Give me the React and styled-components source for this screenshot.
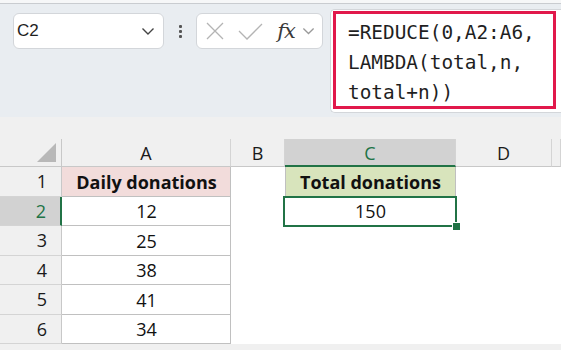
import React from "react";
import styled, { createGlobalStyle } from "styled-components";

const GlobalStyle = createGlobalStyle`
  html, body {
    margin: 0;
    padding: 0;
    background: #f0f0f0;
    width: 561px;
    height: 350px;
    overflow: hidden;
  }
`;

const Page = styled.div`
  width: 561px;
  height: 350px;
  display: flex;
  flex-direction: column;
  font-family: "Open Sans", "Liberation Sans", sans-serif;
  overflow: hidden;
`;

const FormulaBar = styled.div`
  height: 117px;
  background: #e9edf1;
  border-top: 3px solid #f6f7f8;
  box-shadow: inset 0 1px 0 #c9ccd0;
  display: flex;
  align-items: flex-start;
  padding: 6px 0 0 13px;
  box-sizing: border-box;
`;

const Box = styled.div`
  height: 36px;
  width: ${(p) => p.$width}px;
  margin-top: 4px;
  box-sizing: border-box;
  background: #fff;
  border: 1px solid #d3d6da;
  border-radius: 6px;
  display: flex;
  align-items: center;
`;

const NameText = styled.span`
  flex: 1;
  padding-left: 3px;
  font-family: "Liberation Sans", Arial, sans-serif;
  font-size: 17px;
  color: #1e1e1e;
`;

const Dots = styled.div`
  width: 32px;
  height: 44px;
  display: flex;
  flex-direction: column;
  align-items: center;
  justify-content: center;
  gap: 2px;
  span {
    width: 3px;
    height: 3px;
    background: #555;
    border-radius: 1px;
  }
`;

const IconSlot = styled.div`
  display: flex;
  align-items: center;
  justify-content: center;
  width: ${(p) => p.$w}px;
  margin-left: ${(p) => p.$ml || 0}px;
  margin-right: ${(p) => p.$mr || 0}px;
`;

const Fx = styled.span`
  font-family: "DejaVu Serif", "Liberation Serif", serif;
  font-style: italic;
  font-size: 21px;
  color: #3a3a3a;
  letter-spacing: -1px;
`;

const FormulaInput = styled.div`
  flex: 1;
  height: 104px;
  margin-left: 7px;
  background: #fff;
  border: 1px solid #d3d6da;
  border-right: none;
  border-radius: 5px 0 0 5px;
  padding: 1px 4px 0 2px;
  box-sizing: border-box;
`;

const Highlight = styled.div`
  width: 223px;
  height: 98px;
  box-sizing: border-box;
  border: 3px solid #e1184b;
  padding: 4px 0 0 12px;
  font-family: "DejaVu Sans Mono", "Liberation Mono", monospace;
  font-size: 19.4px;
  line-height: 30px;
  color: #1f1f1f;
  white-space: pre;
`;

const Gap = styled.div`
  height: 22px;
  background: #f0f0f0;
`;

const Grid = styled.div`
  display: grid;
  grid-template-columns: 62px 169px 54px 171px 96px 1fr;
  grid-template-rows: 28px repeat(6, 29.5px);
  background: #fff;
`;

const Corner = styled.div`
  background: #f0f0f0;
  border-right: 1px solid #c8c8c8;
  border-bottom: 1px solid #c8c8c8;
  position: relative;
  &::after {
    content: "";
    position: absolute;
    right: 5px;
    bottom: 4px;
    width: 0;
    height: 0;
    border-left: 19px solid transparent;
    border-bottom: 19px solid #b8b8b8;
  }
`;

const ColHead = styled.div`
  background: ${(p) => (p.$active ? "#d2d2d2" : "#f0f0f0")};
  color: ${(p) => (p.$active ? "#217346" : "#1a1a1a")};
  border-right: 1px solid #d4d4d4;
  border-bottom: ${(p) => (p.$active ? "2px solid #217346" : "1px solid #c8c8c8")};
  display: flex;
  align-items: center;
  justify-content: center;
  font-size: 18px;
  box-sizing: border-box;
  padding-top: ${(p) => (p.$active ? "1px" : "0")};
`;

const RowHead = styled.div`
  background: ${(p) => (p.$active ? "#d2d2d2" : "#f0f0f0")};
  color: ${(p) => (p.$active ? "#217346" : "#1a1a1a")};
  border-right: ${(p) => (p.$active ? "2px solid #217346" : "1px solid #c8c8c8")};
  border-bottom: 1px solid #d4d4d4;
  display: flex;
  align-items: center;
  justify-content: flex-end;
  padding-right: 14px;
  font-size: 18px;
  box-sizing: border-box;
`;

const Cell = styled.div`
  background: ${(p) => p.$fill || "#fff"};
  box-shadow: ${(p) =>
    p.$bordered
      ? `inset -1px -1px 0 #c0c0c0${p.$left ? ", inset 1px 0 0 #c0c0c0" : ""}`
      : "none"};
  display: flex;
  align-items: center;
  justify-content: center;
  font-size: 18px;
  font-weight: ${(p) => (p.$bold ? 700 : 400)};
  color: #111;
  position: relative;
`;

const Selection = styled.div`
  position: absolute;
  z-index: 2;
  left: -2px;
  top: -1px;
  right: -1px;
  bottom: -1px;
  border: 2px solid #217346;
  pointer-events: none;
`;

const Handle = styled.span`
  position: absolute;
  right: -6px;
  bottom: -6px;
  width: 7px;
  height: 7px;
  background: #217346;
  border: 1px solid #fff;
`;

const Chevron = ({ color = "#444", size = 14 }) => (
  <svg width={size} height={size / 2 + 2} viewBox="0 0 14 9">
    <path d="M1.5 1.5 L7 7 L12.5 1.5" fill="none" stroke={color} strokeWidth="1.4" />
  </svg>
);

const columns = ["A", "B", "C", "D", ""];
const values = [12, 25, 38, 41, 34];

export default function App() {
  return (
    <Page>
      <GlobalStyle />
      <FormulaBar>
        <Box $width={151}>
          <NameText>C2</NameText>
          <IconSlot $w={22} $mr={4}>
            <Chevron />
          </IconSlot>
        </Box>
        <Dots>
          <span />
          <span />
          <span />
        </Dots>
        <Box $width={127}>
          <IconSlot $w={19} $ml={8}>
            <svg width="18" height="18" viewBox="0 0 18 18">
              <path d="M1 1 L17 17 M17 1 L1 17" stroke="#b4b4b4" strokeWidth="1.3" />
            </svg>
          </IconSlot>
          <IconSlot $w={26} $ml={13}>
            <svg width="25" height="17" viewBox="0 0 25 17">
              <path d="M1 8 L9 16 L24 1" fill="none" stroke="#b4b4b4" strokeWidth="1.3" />
            </svg>
          </IconSlot>
          <IconSlot $w={24} $ml={11}>
            <Fx>fx</Fx>
          </IconSlot>
          <IconSlot $w={16} $ml={2}>
            <Chevron color="#9a9a9a" size={13} />
          </IconSlot>
        </Box>
        <FormulaInput>
          <Highlight>{"=REDUCE(0,A2:A6,\nLAMBDA(total,n,\ntotal+n))"}</Highlight>
        </FormulaInput>
      </FormulaBar>
      <Gap />
      <Grid>
        <Corner />
        {columns.map((c, i) => (
          <ColHead key={i} $active={c === "C"}>
            {c}
          </ColHead>
        ))}

        <RowHead>1</RowHead>
        <Cell $bordered $fill="#f2dcdb" $bold>
          Daily donations
        </Cell>
        <Cell />
        <Cell $bordered $left $fill="#d8e4bc" $bold>
          Total donations
        </Cell>
        <Cell />
        <Cell />

        {values.map((v, i) => (
          <React.Fragment key={v}>
            <RowHead $active={i === 0}>{i + 2}</RowHead>
            <Cell $bordered>{v}</Cell>
            <Cell />
            {i === 0 ? (
              <Cell>
                150
                <Selection>
                  <Handle />
                </Selection>
              </Cell>
            ) : (
              <Cell />
            )}
            <Cell />
            <Cell />
          </React.Fragment>
        ))}
      </Grid>
    </Page>
  );
}
